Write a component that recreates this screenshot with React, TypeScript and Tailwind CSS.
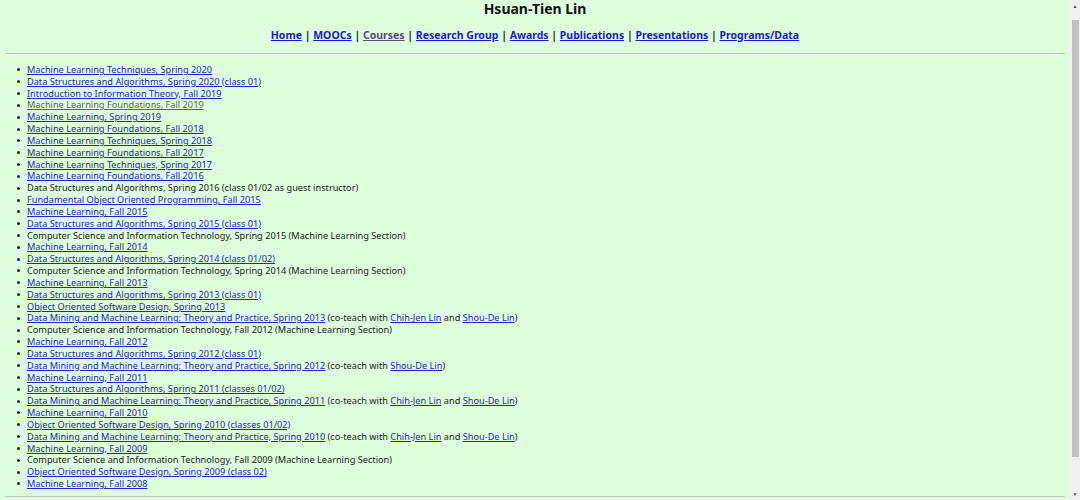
import React from "react";

type Part = { text: string; href?: boolean; visited?: boolean };

const L = (text: string, visited = false): Part => ({ text, href: true, visited });
const T = (text: string): Part => ({ text });

const courses: Part[][] = [
  [L("Machine Learning Techniques, Spring 2020")],
  [L("Data Structures and Algorithms, Spring 2020 (class 01)")],
  [L("Introduction to Information Theory, Fall 2019")],
  [L("Machine Learning Foundations, Fall 2019", true)],
  [L("Machine Learning, Spring 2019")],
  [L("Machine Learning Foundations, Fall 2018")],
  [L("Machine Learning Techniques, Spring 2018")],
  [L("Machine Learning Foundations, Fall 2017")],
  [L("Machine Learning Techniques, Spring 2017")],
  [L("Machine Learning Foundations, Fall 2016")],
  [T("Data Structures and Algorithms, Spring 2016 (class 01/02 as guest instructor)")],
  [L("Fundamental Object Oriented Programming, Fall 2015")],
  [L("Machine Learning, Fall 2015")],
  [L("Data Structures and Algorithms, Spring 2015 (class 01)")],
  [T("Computer Science and Information Technology, Spring 2015 (Machine Learning Section)")],
  [L("Machine Learning, Fall 2014")],
  [L("Data Structures and Algorithms, Spring 2014 (class 01/02)")],
  [T("Computer Science and Information Technology, Spring 2014 (Machine Learning Section)")],
  [L("Machine Learning, Fall 2013")],
  [L("Data Structures and Algorithms, Spring 2013 (class 01)")],
  [L("Object Oriented Software Design, Spring 2013")],
  [
    L("Data Mining and Machine Learning: Theory and Practice, Spring 2013"),
    T(" (co-teach with "),
    L("Chih-Jen Lin"),
    T(" and "),
    L("Shou-De Lin"),
    T(")"),
  ],
  [T("Computer Science and Information Technology, Fall 2012 (Machine Learning Section)")],
  [L("Machine Learning, Fall 2012")],
  [L("Data Structures and Algorithms, Spring 2012 (class 01)")],
  [
    L("Data Mining and Machine Learning: Theory and Practice, Spring 2012"),
    T(" (co-teach with "),
    L("Shou-De Lin"),
    T(")"),
  ],
  [L("Machine Learning, Fall 2011")],
  [L("Data Structures and Algorithms, Spring 2011 (classes 01/02)")],
  [
    L("Data Mining and Machine Learning: Theory and Practice, Spring 2011"),
    T(" (co-teach with "),
    L("Chih-Jen Lin"),
    T(" and "),
    L("Shou-De Lin"),
    T(")"),
  ],
  [L("Machine Learning, Fall 2010")],
  [L("Object Oriented Software Design, Spring 2010 (classes 01/02)")],
  [
    L("Data Mining and Machine Learning: Theory and Practice, Spring 2010"),
    T(" (co-teach with "),
    L("Chih-Jen Lin"),
    T(" and "),
    L("Shou-De Lin"),
    T(")"),
  ],
  [L("Machine Learning, Fall 2009")],
  [T("Computer Science and Information Technology, Fall 2009 (Machine Learning Section)")],
  [L("Object Oriented Software Design, Spring 2009 (class 02)")],
  [L("Machine Learning, Fall 2008")],
];

const nav = [
  { name: "Home" },
  { name: "MOOCs" },
  { name: "Courses", visited: true },
  { name: "Research Group" },
  { name: "Awards" },
  { name: "Publications" },
  { name: "Presentations" },
  { name: "Programs/Data" },
];

function Hr() {
  return <div className="h-[2px] border-t border-[#b9c4b9] border-b border-b-[#eef8ee]" />;
}

export default function App() {
  return (
    <div className="w-[1080px] h-[500px] overflow-hidden flex bg-[#ddffdd] text-[#222] font-['Noto_Sans',sans-serif]">
      <div className="flex-1 px-[5px]">
        {/* 名前 */}
        <h1 className="h-[18px] pt-[1px] text-center text-[14px] leading-[16px] font-bold text-[#111]">
          Hsuan-Tien Lin
        </h1>

        {/* ナビ */}
        <p className="mt-[10px] h-[14px] text-center text-[10.5px] leading-[14px] font-bold text-[#222]">
          {nav.map((n, i) => (
            <React.Fragment key={n.name}>
              {i > 0 && " | "}
              <a
                href="#"
                className={n.visited ? "underline text-[#5a4a78]" : "underline text-[#1a1ad0]"}
              >
                {n.name}
              </a>
            </React.Fragment>
          ))}
        </p>

        <div className="mt-[11px]">
          <Hr />
        </div>

        {/* コース一覧 */}
        <ul className="mt-[9px] pl-[12px] text-[9.2px] leading-[11.83px]">
          {courses.map((parts, i) => (
            <li key={i} className="flex items-center gap-[7px] whitespace-nowrap">
              <span className="w-[3px] h-[3px] rounded-full bg-[#222] shrink-0" />
              <span>
                {parts.map((p, j) =>
                  p.href ? (
                    <a
                      key={j}
                      href="#"
                      className={p.visited ? "underline text-[#5f5f6a]" : "underline text-[#2424c8]"}
                    >
                      {p.text}
                    </a>
                  ) : (
                    <span key={j}>{p.text}</span>
                  )
                )}
              </span>
            </li>
          ))}
        </ul>

        <div className="mt-[6px]">
          <Hr />
        </div>
      </div>

      {/* スクロールバー */}
      <div className="w-[10px] h-full bg-[#f0f0f0] flex flex-col items-center">
        <div className="h-[12px] flex items-center justify-center text-[5px] leading-none text-[#505050]">▲</div>
        <div className="mt-[8px] w-[7px] h-[437px] bg-[#c1c1c1]" />
        <div className="flex-1" />
        <div className="h-[12px] flex items-center justify-center text-[5px] leading-none text-[#505050]">▼</div>
      </div>
    </div>
  );
}
